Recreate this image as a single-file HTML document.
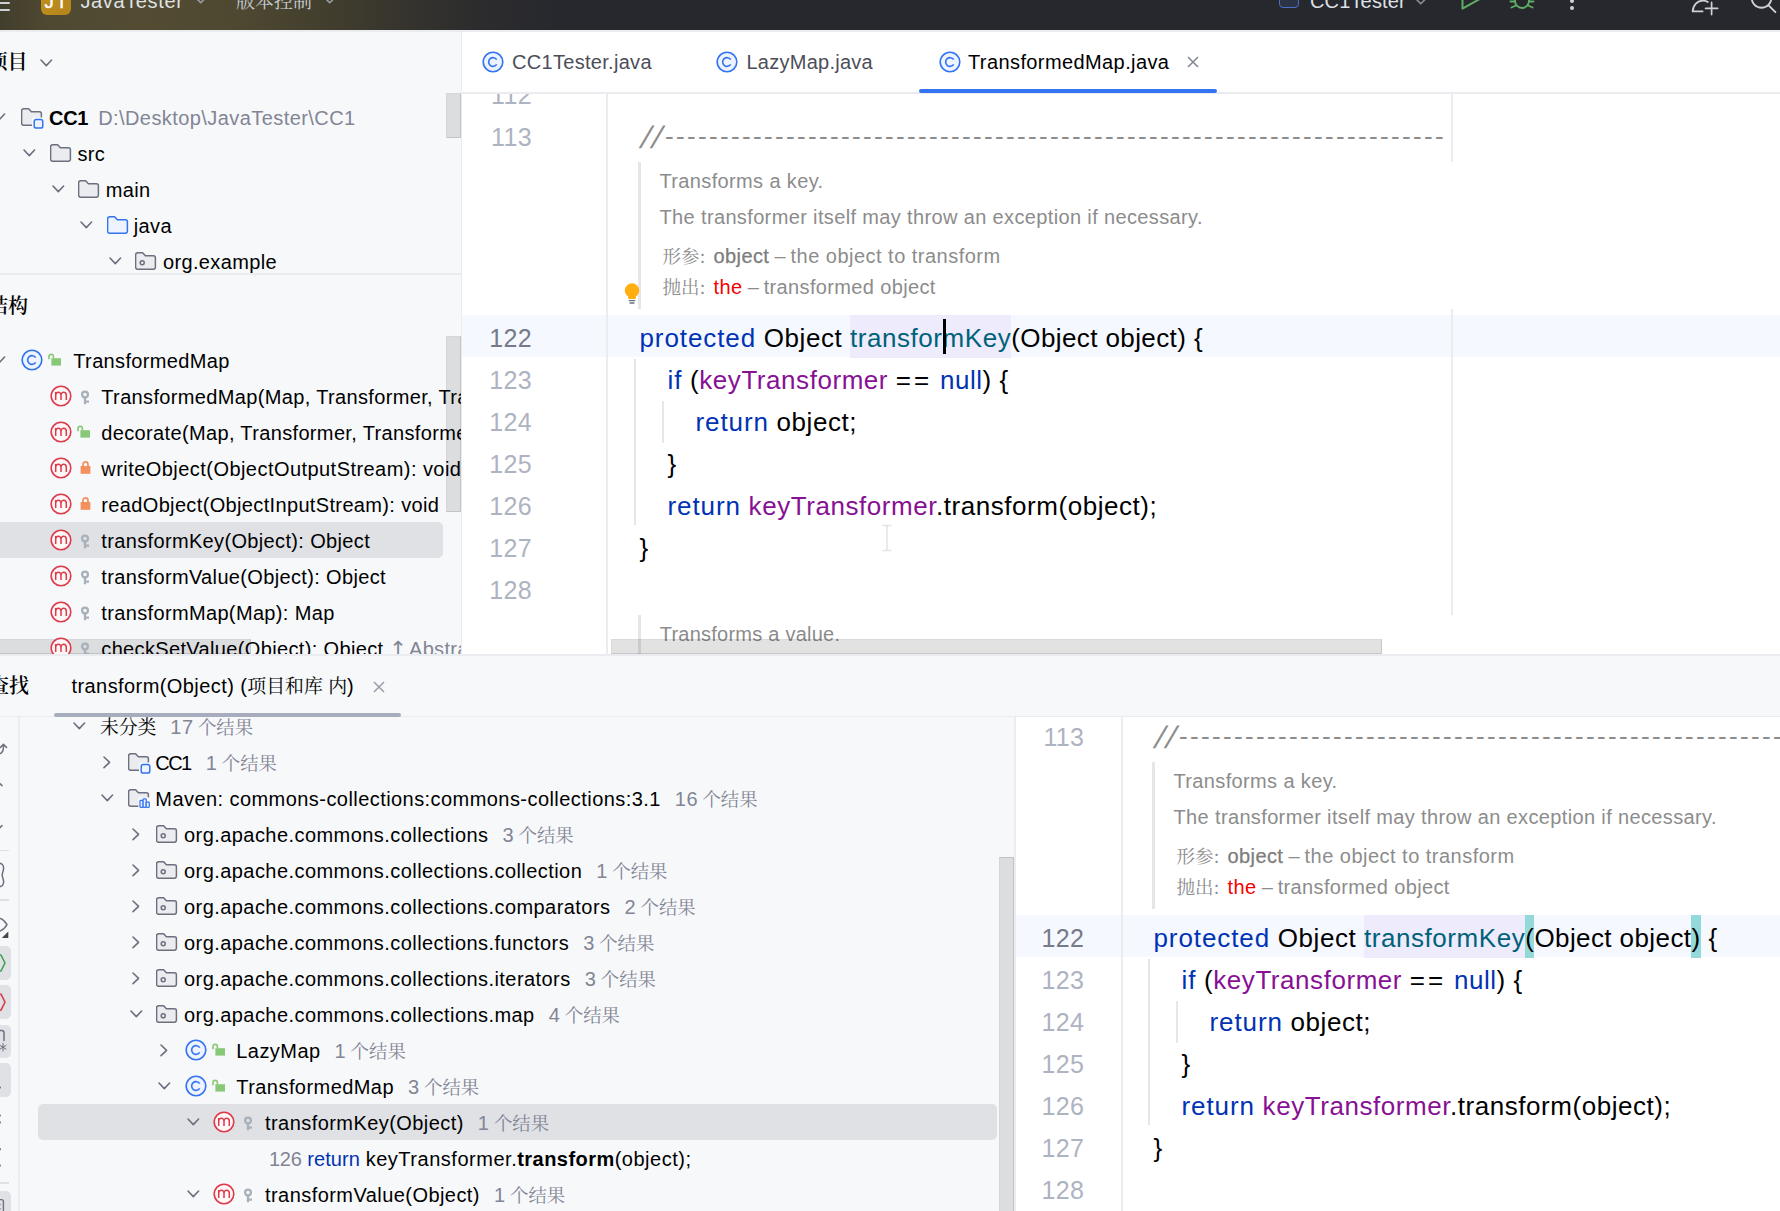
<!DOCTYPE html>
<html lang="zh-CN"><head><meta charset="utf-8"><title>JavaTester – TransformedMap.java</title>
<style>
html,body{margin:0;padding:0}
body{width:1780px;height:1211px;overflow:hidden;position:relative;background:#f7f8fa;font-family:'Liberation Sans','Noto Serif CJK SC',sans-serif;}
.a{position:absolute;display:block}
.t{position:absolute;white-space:pre;overflow:visible}
.cj{font-family:'Noto Serif CJK SC','Noto Sans CJK SC',serif;line-height:0;letter-spacing:0}
.clip{position:absolute;overflow:hidden}
.kw{color:#0033b3;letter-spacing:0.9px}.fd{color:#871094}.fn{color:#00627a}.cm{color:#8c8c8c}
.g{color:#818594}
.sb{background:rgba(0,0,0,0.105);box-sizing:border-box;border:1.5px solid rgba(0,0,0,0.03);border-right-color:rgba(0,0,0,0.11);border-bottom-color:rgba(0,0,0,0.11)}
</style></head><body>

<div class="a" style="left:0;top:0;width:1780px;height:30px;background:#27282e"></div>
<div class="a" style="left:0;top:0;width:600px;height:30px;background:linear-gradient(90deg,#423e2d 0,#4f4932 50px,#534c33 140px,#4e4831 240px,#433f2e 320px,#36342d 400px,#2c2c2e 480px,#27282e 560px)"></div>
<div class="a" style="left:0;top:30px;width:1780px;height:2px;background:#ebecf0"></div>
<div class="a" style="left:-6px;top:2.1px;width:15.6px;height:2.2px;border-radius:1.1px;background:#ced0d6"></div>
<div class="a" style="left:-6px;top:8.9px;width:15.6px;height:2.2px;border-radius:1.1px;background:#ced0d6"></div>
<div class="a" style="left:41px;top:-15px;width:30px;height:30px;border-radius:6px;background:linear-gradient(135deg,#c4921f,#b4831c)"></div>
<div class="t" style="left:44.6px;top:-15.7px;height:36px;line-height:36px;font-size:18.5px;letter-spacing:2.2px;color:#fff;-webkit-text-stroke:0.4px #fff;">JT</div>
<div class="t" style="left:80.5px;top:-16.7px;height:36px;line-height:36px;font-size:20px;letter-spacing:0.62px;color:#dfe1e5;">JavaTester</div>
<svg class="a" style="left:193.75px;top:-4.0px" width="13.5" height="8.8" viewBox="-2 -2 13.5 8.8"><path d="M0 0L4.75 4.8L9.5 0" fill="none" stroke="#9a9ca6" stroke-width="1.6" stroke-linecap="round" stroke-linejoin="round"/></svg>
<div class="t" style="left:236px;top:-16.4px;height:36px;line-height:36px;font-size:19px;letter-spacing:0px;color:#c9ccd6;"><span class="cj" style="">版本控制</span></div>
<svg class="a" style="left:322.75px;top:-4.0px" width="13.5" height="8.8" viewBox="-2 -2 13.5 8.8"><path d="M0 0L4.75 4.8L9.5 0" fill="none" stroke="#9a9ca6" stroke-width="1.6" stroke-linecap="round" stroke-linejoin="round"/></svg>
<div class="a" style="left:1279px;top:-12px;width:18px;height:18px;border:1.6px solid #4a6fc4;border-radius:4px;background:#2d3347"></div>
<div class="t" style="left:1310px;top:-17.1px;height:36px;line-height:36px;font-size:20px;letter-spacing:0.15px;color:#dfe1e5;">CC1Tester</div>
<svg class="a" style="left:1414.25px;top:-3.0px" width="13.5" height="8.8" viewBox="-2 -2 13.5 8.8"><path d="M0 0L4.75 4.8L9.5 0" fill="none" stroke="#8a8c96" stroke-width="1.6" stroke-linecap="round" stroke-linejoin="round"/></svg>
<svg class="a" style="left:1459px;top:-12px" width="28" height="24" viewBox="0 0 28 24"><path d="M3.5 -2V20.6L22.5 10Z" fill="none" stroke="#5fad65" stroke-width="2" stroke-linejoin="round"/></svg>
<svg class="a" style="left:1506px;top:-12px" width="32" height="26" viewBox="0 0 32 26"><g fill="none" stroke="#5fad65" stroke-width="1.9" stroke-linecap="round"><path d="M9 2V13A7 7 0 0 0 23 13V2Z"/><path d="M9 13.5H4.5M23 13.5H27.5M10 17.5L5.5 19.5M22 17.5L26.5 19.5"/></g></svg>
<div class="a" style="left:1570.3px;top:6.3px;width:3.6px;height:3.6px;border-radius:2px;background:#ced0d6"></div>
<div class="a" style="left:1570.3px;top:-1.1px;width:3.6px;height:3.6px;border-radius:2px;background:#ced0d6"></div>
<svg class="a" style="left:1688px;top:-10px" width="34" height="26" viewBox="0 0 34 26"><g fill="none" stroke="#ced0d6" stroke-width="1.7" stroke-linecap="round" stroke-linejoin="round"><path d="M14.6 21.4H4.6C5 15 9.5 10.5 15 10.6C17 10.6 18.6 11.2 19.8 12"/><path d="M23.6 12.4V24.6M17.6 18.4H29.6"/></g></svg>
<svg class="a" style="left:1746px;top:-14px" width="34" height="30" viewBox="0 0 34 30"><g fill="none" stroke="#ced0d6" stroke-width="1.9" stroke-linecap="round"><circle cx="15.5" cy="12" r="9.8"/><path d="M22.6 19.4L29.4 26.2"/></g></svg>
<div class="a" style="left:460.6px;top:32px;width:1.4px;height:622.3px;background:#ebecf0"></div>
<div class="t" style="left:-12.5px;top:44.0px;height:36px;line-height:36px;font-size:20px;letter-spacing:0px;color:#000;font-weight:600;"><span class="cj" style="">项目</span></div>
<svg class="a" style="left:38.7px;top:58.400000000000006px" width="14.6" height="9.6" viewBox="-2 -2 14.6 9.6"><path d="M0 0L5.3 5.6L10.6 0" fill="none" stroke="#6c707e" stroke-width="1.6" stroke-linecap="round" stroke-linejoin="round"/></svg>
<svg class="a" style="left:-8.3px;top:112.4px" width="14.6" height="9.6" viewBox="-2 -2 14.6 9.6"><path d="M0 0L5.3 5.6L10.6 0" fill="none" stroke="#6c707e" stroke-width="1.6" stroke-linecap="round" stroke-linejoin="round"/></svg>
<svg class="a" style="left:21.4px;top:107.6px" width="25" height="23" viewBox="0 0 25 23"><path d="M2.6 0.8H7.6L10.4 3.8H18.4A2 2 0 0 1 20.4 5.8V15.2A2 2 0 0 1 18.4 17.2H2.6A2 2 0 0 1 0.6 15.2V2.8A2 2 0 0 1 2.6 0.8Z" fill="#ebecf0" stroke="#6c707e" stroke-width="1.5" stroke-linejoin="round"/><rect x="11" y="9.5" width="12" height="12" fill="#f7f8fa"/><rect x="13.2" y="11.5" width="8.6" height="8.6" rx="2.2" fill="#edf3ff" stroke="#3574f0" stroke-width="1.5"/></svg>
<div class="t" style="left:49px;top:100.0px;height:36px;line-height:36px;font-size:20px;letter-spacing:0.35px;color:#000;"><b style="letter-spacing:-0.3px">CC1</b><span style="color:#818594;margin-left:10px;letter-spacing:0.43px">D:\Desktop\JavaTester\CC1</span></div>
<svg class="a" style="left:21.9px;top:148.39999999999998px" width="14.6" height="9.6" viewBox="-2 -2 14.6 9.6"><path d="M0 0L5.3 5.6L10.6 0" fill="none" stroke="#6c707e" stroke-width="1.6" stroke-linecap="round" stroke-linejoin="round"/></svg>
<svg class="a" style="left:50.3px;top:144.2px" width="25" height="23" viewBox="0 0 25 23"><path d="M2.6 0.8H7.6L10.4 3.8H18.4A2 2 0 0 1 20.4 5.8V15.2A2 2 0 0 1 18.4 17.2H2.6A2 2 0 0 1 0.6 15.2V2.8A2 2 0 0 1 2.6 0.8Z" fill="#ebecf0" stroke="#6c707e" stroke-width="1.5" stroke-linejoin="round"/></svg>
<div class="t" style="left:77.5px;top:136.0px;height:36px;line-height:36px;font-size:20px;letter-spacing:0.35px;color:#000;">src</div>
<svg class="a" style="left:50.7px;top:184.39999999999998px" width="14.6" height="9.6" viewBox="-2 -2 14.6 9.6"><path d="M0 0L5.3 5.6L10.6 0" fill="none" stroke="#6c707e" stroke-width="1.6" stroke-linecap="round" stroke-linejoin="round"/></svg>
<svg class="a" style="left:78.3px;top:180.2px" width="25" height="23" viewBox="0 0 25 23"><path d="M2.6 0.8H7.6L10.4 3.8H18.4A2 2 0 0 1 20.4 5.8V15.2A2 2 0 0 1 18.4 17.2H2.6A2 2 0 0 1 0.6 15.2V2.8A2 2 0 0 1 2.6 0.8Z" fill="#ebecf0" stroke="#6c707e" stroke-width="1.5" stroke-linejoin="round"/></svg>
<div class="t" style="left:105.7px;top:172.0px;height:36px;line-height:36px;font-size:20px;letter-spacing:0.35px;color:#000;">main</div>
<svg class="a" style="left:78.7px;top:220.39999999999998px" width="14.6" height="9.6" viewBox="-2 -2 14.6 9.6"><path d="M0 0L5.3 5.6L10.6 0" fill="none" stroke="#6c707e" stroke-width="1.6" stroke-linecap="round" stroke-linejoin="round"/></svg>
<svg class="a" style="left:106.8px;top:216.2px" width="25" height="23" viewBox="0 0 25 23"><path d="M2.6 0.8H7.6L10.4 3.8H18.4A2 2 0 0 1 20.4 5.8V15.2A2 2 0 0 1 18.4 17.2H2.6A2 2 0 0 1 0.6 15.2V2.8A2 2 0 0 1 2.6 0.8Z" fill="#edf3ff" stroke="#3574f0" stroke-width="1.5" stroke-linejoin="round"/></svg>
<div class="t" style="left:133.8px;top:208.0px;height:36px;line-height:36px;font-size:20px;letter-spacing:0.35px;color:#000;">java</div>
<svg class="a" style="left:107.7px;top:256.4px" width="14.6" height="9.6" viewBox="-2 -2 14.6 9.6"><path d="M0 0L5.3 5.6L10.6 0" fill="none" stroke="#6c707e" stroke-width="1.6" stroke-linecap="round" stroke-linejoin="round"/></svg>
<svg class="a" style="left:135px;top:252.2px" width="25" height="23" viewBox="0 0 25 23"><path d="M2.6 0.8H7.6L10.4 3.8H18.4A2 2 0 0 1 20.4 5.8V15.2A2 2 0 0 1 18.4 17.2H2.6A2 2 0 0 1 0.6 15.2V2.8A2 2 0 0 1 2.6 0.8Z" fill="#ebecf0" stroke="#6c707e" stroke-width="1.5" stroke-linejoin="round"/><circle cx="7.2" cy="10.8" r="2" fill="none" stroke="#6c707e" stroke-width="1.5"/></svg>
<div class="t" style="left:163px;top:244.0px;height:36px;line-height:36px;font-size:20px;letter-spacing:0.35px;color:#000;">org.example</div>
<div class="a sb" style="left:446px;top:93px;width:15px;height:45px"></div>
<div class="a" style="left:0;top:273px;width:461px;height:1.5px;background:#ebecf0"></div>
<div class="t" style="left:-12px;top:287.7px;height:36px;line-height:36px;font-size:20px;letter-spacing:0px;color:#000;font-weight:600;"><span class="cj" style="">结构</span></div>
<div class="clip" style="left:0;top:330px;width:461px;height:324.3px">
<div class="a" style="left:-10px;top:192px;width:453px;height:36px;border-radius:5px;background:#dfe1e5"></div>
<div class="a sb" style="left:-5px;top:309px;width:256px;height:14.5px"></div>
<svg class="a" style="left:-8.3px;top:25.4px" width="14.6" height="9.6" viewBox="-2 -2 14.6 9.6"><path d="M0 0L5.3 5.6L10.6 0" fill="none" stroke="#6c707e" stroke-width="1.6" stroke-linecap="round" stroke-linejoin="round"/></svg>
<svg class="a" style="left:20px;top:18px" width="24" height="24" viewBox="-12 -12 24 24"><circle r="9.8" fill="#edf3ff" stroke="#3574f0" stroke-width="1.6"/><path d="M3.7 -2.3A4.35 4.35 0 1 0 3.7 2.3" fill="none" stroke="#3574f0" stroke-width="1.6"/></svg>
<svg class="a" style="left:47.6px;top:23px" width="14" height="14" viewBox="0 0 14 14"><rect x="3.4" y="5.2" width="9.6" height="7.4" fill="#89c878"/><path d="M1 6.3V3.6A2.2 2.2 0 0 1 5.4 3.6V5.4" fill="none" stroke="#89c878" stroke-width="1.6"/></svg>
<div class="t" style="left:73.3px;top:13.0px;height:36px;line-height:36px;font-size:20px;letter-spacing:0.35px;color:#000;">TransformedMap</div>
<svg class="a" style="left:49px;top:54px" width="24" height="24" viewBox="-12 -12 24 24"><circle r="9.8" fill="#fff7f7" stroke="#db3b4b" stroke-width="1.6"/><path d="M-5.3 3.9V-3.9M-5.3 -0.8C-5.3 -4.6 0 -4.6 0 -0.8V3.9M0 -0.8C0 -4.6 5.3 -4.6 5.3 -0.8V3.9" fill="none" stroke="#db3b4b" stroke-width="1.5"/></svg>
<svg class="a" style="left:80.4px;top:59.80000000000001px" width="12" height="16" viewBox="0 0 12 16"><circle cx="5" cy="4.6" r="2.9" fill="none" stroke="#a8b1ba" stroke-width="2.3"/><path d="M5 7.4V14.3M5 11.7H9" fill="none" stroke="#a8b1ba" stroke-width="2.3"/></svg>
<div class="t" style="left:101.3px;top:49.0px;height:36px;line-height:36px;font-size:20px;letter-spacing:0.35px;color:#000;">TransformedMap(Map, Transformer, Transformer)</div>
<svg class="a" style="left:49px;top:90px" width="24" height="24" viewBox="-12 -12 24 24"><circle r="9.8" fill="#fff7f7" stroke="#db3b4b" stroke-width="1.6"/><path d="M-5.3 3.9V-3.9M-5.3 -0.8C-5.3 -4.6 0 -4.6 0 -0.8V3.9M0 -0.8C0 -4.6 5.3 -4.6 5.3 -0.8V3.9" fill="none" stroke="#db3b4b" stroke-width="1.5"/></svg>
<svg class="a" style="left:76.6px;top:95px" width="14" height="14" viewBox="0 0 14 14"><rect x="3.4" y="5.2" width="9.6" height="7.4" fill="#89c878"/><path d="M1 6.3V3.6A2.2 2.2 0 0 1 5.4 3.6V5.4" fill="none" stroke="#89c878" stroke-width="1.6"/></svg>
<div class="t" style="left:101.3px;top:85.0px;height:36px;line-height:36px;font-size:20px;letter-spacing:0.35px;color:#000;">decorate(Map, Transformer, Transformer): Map</div>
<svg class="a" style="left:49px;top:126px" width="24" height="24" viewBox="-12 -12 24 24"><circle r="9.8" fill="#fff7f7" stroke="#db3b4b" stroke-width="1.6"/><path d="M-5.3 3.9V-3.9M-5.3 -0.8C-5.3 -4.6 0 -4.6 0 -0.8V3.9M0 -0.8C0 -4.6 5.3 -4.6 5.3 -0.8V3.9" fill="none" stroke="#db3b4b" stroke-width="1.5"/></svg>
<svg class="a" style="left:79.5px;top:130.8px" width="12" height="14" viewBox="0 0 12 14"><rect x="0.6" y="5" width="9.8" height="7.8" fill="#f2905f"/><path d="M3 5.4V3.4A2.5 2.5 0 0 1 8 3.4V5.4" fill="none" stroke="#f2905f" stroke-width="1.7"/></svg>
<div class="t" style="left:101.3px;top:121.0px;height:36px;line-height:36px;font-size:20px;letter-spacing:0.35px;color:#000;"><span style="letter-spacing:0.45px">writeObject(ObjectOutputStream): void</span></div>
<svg class="a" style="left:49px;top:162px" width="24" height="24" viewBox="-12 -12 24 24"><circle r="9.8" fill="#fff7f7" stroke="#db3b4b" stroke-width="1.6"/><path d="M-5.3 3.9V-3.9M-5.3 -0.8C-5.3 -4.6 0 -4.6 0 -0.8V3.9M0 -0.8C0 -4.6 5.3 -4.6 5.3 -0.8V3.9" fill="none" stroke="#db3b4b" stroke-width="1.5"/></svg>
<svg class="a" style="left:79.5px;top:166.8px" width="12" height="14" viewBox="0 0 12 14"><rect x="0.6" y="5" width="9.8" height="7.8" fill="#f2905f"/><path d="M3 5.4V3.4A2.5 2.5 0 0 1 8 3.4V5.4" fill="none" stroke="#f2905f" stroke-width="1.7"/></svg>
<div class="t" style="left:101.3px;top:157.0px;height:36px;line-height:36px;font-size:20px;letter-spacing:0.35px;color:#000;">readObject(ObjectInputStream): void</div>
<svg class="a" style="left:49px;top:198px" width="24" height="24" viewBox="-12 -12 24 24"><circle r="9.8" fill="#fff7f7" stroke="#db3b4b" stroke-width="1.6"/><path d="M-5.3 3.9V-3.9M-5.3 -0.8C-5.3 -4.6 0 -4.6 0 -0.8V3.9M0 -0.8C0 -4.6 5.3 -4.6 5.3 -0.8V3.9" fill="none" stroke="#db3b4b" stroke-width="1.5"/></svg>
<svg class="a" style="left:80.4px;top:203.79999999999995px" width="12" height="16" viewBox="0 0 12 16"><circle cx="5" cy="4.6" r="2.9" fill="none" stroke="#a8b1ba" stroke-width="2.3"/><path d="M5 7.4V14.3M5 11.7H9" fill="none" stroke="#a8b1ba" stroke-width="2.3"/></svg>
<div class="t" style="left:101.3px;top:193.0px;height:36px;line-height:36px;font-size:20px;letter-spacing:0.35px;color:#000;">transformKey(Object): Object</div>
<svg class="a" style="left:49px;top:234px" width="24" height="24" viewBox="-12 -12 24 24"><circle r="9.8" fill="#fff7f7" stroke="#db3b4b" stroke-width="1.6"/><path d="M-5.3 3.9V-3.9M-5.3 -0.8C-5.3 -4.6 0 -4.6 0 -0.8V3.9M0 -0.8C0 -4.6 5.3 -4.6 5.3 -0.8V3.9" fill="none" stroke="#db3b4b" stroke-width="1.5"/></svg>
<svg class="a" style="left:80.4px;top:239.79999999999995px" width="12" height="16" viewBox="0 0 12 16"><circle cx="5" cy="4.6" r="2.9" fill="none" stroke="#a8b1ba" stroke-width="2.3"/><path d="M5 7.4V14.3M5 11.7H9" fill="none" stroke="#a8b1ba" stroke-width="2.3"/></svg>
<div class="t" style="left:101.3px;top:229.0px;height:36px;line-height:36px;font-size:20px;letter-spacing:0.35px;color:#000;">transformValue(Object): Object</div>
<svg class="a" style="left:49px;top:270px" width="24" height="24" viewBox="-12 -12 24 24"><circle r="9.8" fill="#fff7f7" stroke="#db3b4b" stroke-width="1.6"/><path d="M-5.3 3.9V-3.9M-5.3 -0.8C-5.3 -4.6 0 -4.6 0 -0.8V3.9M0 -0.8C0 -4.6 5.3 -4.6 5.3 -0.8V3.9" fill="none" stroke="#db3b4b" stroke-width="1.5"/></svg>
<svg class="a" style="left:80.4px;top:275.79999999999995px" width="12" height="16" viewBox="0 0 12 16"><circle cx="5" cy="4.6" r="2.9" fill="none" stroke="#a8b1ba" stroke-width="2.3"/><path d="M5 7.4V14.3M5 11.7H9" fill="none" stroke="#a8b1ba" stroke-width="2.3"/></svg>
<div class="t" style="left:101.3px;top:265.0px;height:36px;line-height:36px;font-size:20px;letter-spacing:0.35px;color:#000;">transformMap(Map): Map</div>
<svg class="a" style="left:49px;top:306px" width="24" height="24" viewBox="-12 -12 24 24"><circle r="9.8" fill="#fff7f7" stroke="#db3b4b" stroke-width="1.6"/><path d="M-5.3 3.9V-3.9M-5.3 -0.8C-5.3 -4.6 0 -4.6 0 -0.8V3.9M0 -0.8C0 -4.6 5.3 -4.6 5.3 -0.8V3.9" fill="none" stroke="#db3b4b" stroke-width="1.5"/></svg>
<svg class="a" style="left:80.4px;top:311.79999999999995px" width="12" height="16" viewBox="0 0 12 16"><circle cx="5" cy="4.6" r="2.9" fill="none" stroke="#a8b1ba" stroke-width="2.3"/><path d="M5 7.4V14.3M5 11.7H9" fill="none" stroke="#a8b1ba" stroke-width="2.3"/></svg>
<div class="t" style="left:101.3px;top:301.0px;height:36px;line-height:36px;font-size:20px;letter-spacing:0.35px;color:#000;">checkSetValue(Object): Object<span style="color:#818594"> <span style="font-family:DejaVu Sans,sans-serif;font-size:21px;line-height:0;letter-spacing:0;margin-right:2px">↑</span>AbstractInputCheckedMapDecorator</span></div>
</div>
<div class="a sb" style="left:446px;top:336px;width:15px;height:176px"></div>
<div class="a" style="left:462px;top:32px;width:1318px;height:622.3px;background:#fff"></div>
<div class="a" style="left:462px;top:92px;width:1318px;height:2px;background:#ebecf0"></div>
<svg class="a" style="left:480.8px;top:50px" width="24" height="24" viewBox="-12 -12 24 24"><circle r="9.8" fill="#edf3ff" stroke="#3574f0" stroke-width="1.6"/><path d="M3.7 -2.3A4.35 4.35 0 1 0 3.7 2.3" fill="none" stroke="#3574f0" stroke-width="1.6"/></svg>
<div class="t" style="left:512px;top:44.0px;height:36px;line-height:36px;font-size:20px;letter-spacing:0.3px;color:#4b4e58;">CC1Tester.java</div>
<svg class="a" style="left:714.8px;top:50px" width="24" height="24" viewBox="-12 -12 24 24"><circle r="9.8" fill="#edf3ff" stroke="#3574f0" stroke-width="1.6"/><path d="M3.7 -2.3A4.35 4.35 0 1 0 3.7 2.3" fill="none" stroke="#3574f0" stroke-width="1.6"/></svg>
<div class="t" style="left:746.5px;top:44.0px;height:36px;line-height:36px;font-size:20px;letter-spacing:0.25px;color:#4b4e58;">LazyMap.java</div>
<svg class="a" style="left:937.5px;top:50px" width="24" height="24" viewBox="-12 -12 24 24"><circle r="9.8" fill="#edf3ff" stroke="#3574f0" stroke-width="1.6"/><path d="M3.7 -2.3A4.35 4.35 0 1 0 3.7 2.3" fill="none" stroke="#3574f0" stroke-width="1.6"/></svg>
<div class="t" style="left:968px;top:44.0px;height:36px;line-height:36px;font-size:20px;letter-spacing:0.4px;color:#000;">TransformedMap.java</div>
<svg class="a" style="left:1186px;top:55px" width="14" height="14" viewBox="0 0 14 14"><path d="M2 2L12 12M12 2L2 12" stroke="#818594" stroke-width="1.5" fill="none"/></svg>
<div class="a" style="left:919px;top:88.5px;width:298px;height:4.5px;border-radius:2.5px;background:#3574f0"></div>
<div class="clip" style="left:462px;top:94px;width:1318px;height:560.3px">
<div class="a" style="left:-462px;top:-94px;width:1780px;height:1211px">
<div class="a" style="left:462px;top:315px;width:1318px;height:42px;background:#f5f8fe"></div>
<div class="a" style="left:606.3px;top:93.5px;width:1.5px;height:620px;background:#ebecf0"></div>
<div class="t" style="left:472.0px;width:60px;text-align:right;top:73.8px;height:42px;line-height:42px;font-size:25px;letter-spacing:0.35px;color:#aeb3c2">112</div>
<div class="t" style="left:472.0px;width:60px;text-align:right;top:115.8px;height:42px;line-height:42px;font-size:25px;letter-spacing:0.35px;color:#aeb3c2">113</div>
<div class="t" style="left:472.0px;width:60px;text-align:right;top:316.8px;height:42px;line-height:42px;font-size:25px;letter-spacing:0.35px;color:#767a8a">122</div>
<div class="t" style="left:472.0px;width:60px;text-align:right;top:358.8px;height:42px;line-height:42px;font-size:25px;letter-spacing:0.35px;color:#aeb3c2">123</div>
<div class="t" style="left:472.0px;width:60px;text-align:right;top:400.8px;height:42px;line-height:42px;font-size:25px;letter-spacing:0.35px;color:#aeb3c2">124</div>
<div class="t" style="left:472.0px;width:60px;text-align:right;top:442.8px;height:42px;line-height:42px;font-size:25px;letter-spacing:0.35px;color:#aeb3c2">125</div>
<div class="t" style="left:472.0px;width:60px;text-align:right;top:484.8px;height:42px;line-height:42px;font-size:25px;letter-spacing:0.35px;color:#aeb3c2">126</div>
<div class="t" style="left:472.0px;width:60px;text-align:right;top:526.8px;height:42px;line-height:42px;font-size:25px;letter-spacing:0.35px;color:#aeb3c2">127</div>
<div class="t" style="left:472.0px;width:60px;text-align:right;top:568.8px;height:42px;line-height:42px;font-size:25px;letter-spacing:0.35px;color:#aeb3c2">128</div>
<div class="t" style="left:639.5px;top:116px;height:42px;line-height:42px;font-size:26px;letter-spacing:0.55px;color:#000"><span class="cm" style="display:inline-block;transform:skewX(-17.5deg);font-size:31px;line-height:0;position:relative;top:2.2px;letter-spacing:2.4px;margin-left:2.5px;margin-right:1px">//</span><span class="cm" style="letter-spacing:2.34px;position:relative;top:-1px">-----------------------------------------------------------------------</span></div>
<div class="a" style="left:638.0px;top:162.3px;width:3px;height:146.5px;background:#e6e6e8"></div>
<div class="t" style="left:659.5px;top:163.0px;height:36px;line-height:36px;font-size:20px;letter-spacing:0.36px;color:#8c8c8c;">Transforms a key.</div>
<div class="t" style="left:659.5px;top:199.0px;height:36px;line-height:36px;font-size:20px;letter-spacing:0.36px;color:#8c8c8c;">The transformer itself may throw an exception if necessary.</div>
<div class="t" style="left:662.5px;top:237.5px;height:36px;line-height:36px;font-size:20px;letter-spacing:0.36px;color:#8c8c8c;"><span class="cj" style="font-size:18.5px;">形参:</span><span style="margin-left:8px;color:#7c7c7c;-webkit-text-stroke:0.25px #7c7c7c;letter-spacing:0.4px">object</span><span style="letter-spacing:-0.35px"> – </span><span style="letter-spacing:0.48px">the object to transform</span></div>
<div class="t" style="left:662.5px;top:269.0px;height:36px;line-height:36px;font-size:20px;letter-spacing:0.36px;color:#8c8c8c;"><span class="cj" style="font-size:18.5px;">抛出:</span><span style="margin-left:8px;color:#f50000">the</span><span style="letter-spacing:-0.35px"> – </span>transformed object</div>
<div class="a" style="left:634.0px;top:359px;width:1.5px;height:166px;background:#e6e6e9"></div>
<div class="a" style="left:662.0px;top:401px;width:1.5px;height:42px;background:#e6e6e9"></div>
<div class="t" style="left:639.5px;top:317px;height:42px;line-height:42px;font-size:26px;letter-spacing:0.55px;color:#000"><span class="kw">protected</span> Object <span class="fn" style="background:#edebfc;padding:8px 0 5px">transformKey</span><span style="letter-spacing:0.4px">(Object object) {</span></div>
<div class="t" style="left:667.5px;top:359px;height:42px;line-height:42px;font-size:26px;letter-spacing:0.55px;color:#000"><span class="kw">if</span> (<span class="fd">keyTransformer</span> <span style="letter-spacing:3px">==</span> <span class="kw" style="letter-spacing:0.5px">null</span>) {</div>
<div class="t" style="left:695.5px;top:401px;height:42px;line-height:42px;font-size:26px;letter-spacing:0.55px;color:#000"><span class="kw">return</span> object;</div>
<div class="t" style="left:667.5px;top:443px;height:42px;line-height:42px;font-size:26px;letter-spacing:0.55px;color:#000">}</div>
<div class="t" style="left:667.5px;top:485px;height:42px;line-height:42px;font-size:26px;letter-spacing:0.55px;color:#000"><span class="kw">return</span> <span class="fd">keyTransformer</span>.transform(object);</div>
<div class="t" style="left:639.5px;top:527px;height:42px;line-height:42px;font-size:26px;letter-spacing:0.55px;color:#000">}</div>
<div class="a" style="left:1451px;top:93px;width:2px;height:69px;background:#ebecf0"></div>
<div class="a" style="left:1451px;top:309px;width:2px;height:306px;background:#ebecf0"></div>
<div class="a" style="left:943px;top:319px;width:3px;height:35px;background:#000"></div>
<svg class="a" style="left:622px;top:281px" width="20" height="26" viewBox="0 0 20 26"><circle cx="10" cy="9.5" r="7.2" fill="#ffaf0f"/><path d="M6.2 14H13.8V18H6.2Z" fill="#ffaf0f"/><path d="M6.8 19.6H13.2M7.6 22H12.4" stroke="#6c707e" stroke-width="1.3" fill="none"/></svg>
<div class="a" style="left:637.8px;top:615.3px;width:3px;height:40px;background:#e6e6e8"></div>
<div class="t" style="left:659.7px;top:616.1px;height:36px;line-height:36px;font-size:20px;letter-spacing:0.24px;color:#8c8c8c;">Transforms a value.</div>
<svg class="a" style="left:880px;top:524px" width="14" height="28" viewBox="0 0 14 28"><path d="M2.5 1.5H11.5M2.5 26.5H11.5M7 1.5V26.5" stroke="#e4e4e8" stroke-width="1.6" fill="none"/></svg>
<div class="a sb" style="left:611px;top:639.4px;width:770.5px;height:14.6px;background:rgba(0,0,0,0.115)"></div>
</div></div>
<div class="a" style="left:0;top:654.3px;width:1780px;height:1.5px;background:#ebecf0"></div>
<div class="a" style="left:0;top:655.8px;width:1780px;height:560px;background:#f7f8fa"></div>
<div class="t" style="left:-11px;top:668.0px;height:36px;line-height:36px;font-size:20px;letter-spacing:0px;color:#000;font-weight:600;"><span class="cj" style="">查找</span></div>
<div class="t" style="left:71.5px;top:668.0px;height:36px;line-height:36px;font-size:20px;letter-spacing:0.42px;color:#000;">transform(Object) (<span class="cj" style="font-size:18.9px;word-spacing:0.5px;">项目和库 内</span>)</div>
<svg class="a" style="left:372px;top:680px" width="14" height="14" viewBox="0 0 14 14"><path d="M2 2L12 12M12 2L2 12" stroke="#9a9da8" stroke-width="1.5" fill="none"/></svg>
<div class="a" style="left:0;top:715.5px;width:1780px;height:1.5px;background:#ebecf0"></div>
<div class="a" style="left:54px;top:712.5px;width:347px;height:4px;border-radius:2px;background:#a8adbd"></div>
<div class="a" style="left:18px;top:717px;width:1.5px;height:500px;background:#ebecf0"></div>
<div class="clip" style="left:20px;top:717px;width:994px;height:494px">
<div class="a" style="left:-20px;top:-717px;width:1780px;height:1211px">
<div class="a" style="left:38px;top:1103.6px;width:959px;height:36.2px;border-radius:5px;background:#dfe1e5"></div>
<svg class="a" style="left:71.7px;top:721.4000000000001px" width="14.6" height="9.6" viewBox="-2 -2 14.6 9.6"><path d="M0 0L5.3 5.6L10.6 0" fill="none" stroke="#6c707e" stroke-width="1.6" stroke-linecap="round" stroke-linejoin="round"/></svg>
<div class="t" style="left:100px;top:709.0px;height:36px;line-height:36px;font-size:20px;letter-spacing:0.44px;color:#000;"><span class="cj" style="font-size:18.8px;">未分类</span><span class="g" style="margin-left:14px">17 <span class="cj" style="font-size:18.4px;margin-left:-1.5px;">个结果</span></span></div>
<svg class="a" style="left:102.2px;top:754.9000000000001px" width="9.6" height="14.6" viewBox="-2 -2 9.6 14.6"><path d="M0 0L5.6 5.3L0 10.6" fill="none" stroke="#6c707e" stroke-width="1.6" stroke-linecap="round" stroke-linejoin="round"/></svg>
<svg class="a" style="left:127.5px;top:752.8px" width="25" height="23" viewBox="0 0 25 23"><path d="M2.6 0.8H7.6L10.4 3.8H18.4A2 2 0 0 1 20.4 5.8V15.2A2 2 0 0 1 18.4 17.2H2.6A2 2 0 0 1 0.6 15.2V2.8A2 2 0 0 1 2.6 0.8Z" fill="#ebecf0" stroke="#6c707e" stroke-width="1.5" stroke-linejoin="round"/><rect x="11" y="9.5" width="12" height="12" fill="#f7f8fa"/><rect x="13.2" y="11.5" width="8.6" height="8.6" rx="2.2" fill="#edf3ff" stroke="#3574f0" stroke-width="1.5"/></svg>
<div class="t" style="left:155.3px;top:745.0px;height:36px;line-height:36px;font-size:20px;letter-spacing:0.44px;color:#000;"><span style="letter-spacing:-1.6px">CC1</span><span style="margin-left:1.2px"></span><span class="g" style="margin-left:14px">1 <span class="cj" style="font-size:18.4px;margin-left:-1.5px;">个结果</span></span></div>
<svg class="a" style="left:99.7px;top:793.4000000000001px" width="14.6" height="9.6" viewBox="-2 -2 14.6 9.6"><path d="M0 0L5.3 5.6L10.6 0" fill="none" stroke="#6c707e" stroke-width="1.6" stroke-linecap="round" stroke-linejoin="round"/></svg>
<svg class="a" style="left:127.5px;top:788.8px" width="25" height="23" viewBox="0 0 25 23"><path d="M2.6 0.8H7.6L10.4 3.8H18.4A2 2 0 0 1 20.4 5.8V15.2A2 2 0 0 1 18.4 17.2H2.6A2 2 0 0 1 0.6 15.2V2.8A2 2 0 0 1 2.6 0.8Z" fill="#ebecf0" stroke="#6c707e" stroke-width="1.5" stroke-linejoin="round"/><rect x="10.4" y="8.4" width="13" height="12" fill="#f7f8fa"/><g fill="#edf3ff" stroke="#3574f0" stroke-width="1.25"><rect x="12" y="11.4" width="3.1" height="6.9" rx="0.8"/><rect x="15.1" y="9.8" width="3.1" height="8.5" rx="0.8"/><rect x="18.2" y="13" width="3.1" height="5.3" rx="0.8"/></g></svg>
<div class="t" style="left:155.3px;top:781.0px;height:36px;line-height:36px;font-size:20px;letter-spacing:0.44px;color:#000;">Maven: commons-collections:commons-collections:3.1<span class="g" style="margin-left:14px">16 <span class="cj" style="font-size:18.4px;margin-left:-1.5px;">个结果</span></span></div>
<svg class="a" style="left:131.2px;top:826.9000000000001px" width="9.6" height="14.6" viewBox="-2 -2 9.6 14.6"><path d="M0 0L5.6 5.3L0 10.6" fill="none" stroke="#6c707e" stroke-width="1.6" stroke-linecap="round" stroke-linejoin="round"/></svg>
<svg class="a" style="left:156px;top:825.2px" width="25" height="23" viewBox="0 0 25 23"><path d="M2.6 0.8H7.6L10.4 3.8H18.4A2 2 0 0 1 20.4 5.8V15.2A2 2 0 0 1 18.4 17.2H2.6A2 2 0 0 1 0.6 15.2V2.8A2 2 0 0 1 2.6 0.8Z" fill="#ebecf0" stroke="#6c707e" stroke-width="1.5" stroke-linejoin="round"/><circle cx="7.2" cy="10.8" r="2" fill="none" stroke="#6c707e" stroke-width="1.5"/></svg>
<div class="t" style="left:184px;top:817.0px;height:36px;line-height:36px;font-size:20px;letter-spacing:0.44px;color:#000;">org.apache.commons.collections<span class="g" style="margin-left:14px">3 <span class="cj" style="font-size:18.4px;margin-left:-1.5px;">个结果</span></span></div>
<svg class="a" style="left:131.2px;top:862.9000000000001px" width="9.6" height="14.6" viewBox="-2 -2 9.6 14.6"><path d="M0 0L5.6 5.3L0 10.6" fill="none" stroke="#6c707e" stroke-width="1.6" stroke-linecap="round" stroke-linejoin="round"/></svg>
<svg class="a" style="left:156px;top:861.2px" width="25" height="23" viewBox="0 0 25 23"><path d="M2.6 0.8H7.6L10.4 3.8H18.4A2 2 0 0 1 20.4 5.8V15.2A2 2 0 0 1 18.4 17.2H2.6A2 2 0 0 1 0.6 15.2V2.8A2 2 0 0 1 2.6 0.8Z" fill="#ebecf0" stroke="#6c707e" stroke-width="1.5" stroke-linejoin="round"/><circle cx="7.2" cy="10.8" r="2" fill="none" stroke="#6c707e" stroke-width="1.5"/></svg>
<div class="t" style="left:184px;top:853.0px;height:36px;line-height:36px;font-size:20px;letter-spacing:0.44px;color:#000;">org.apache.commons.collections.collection<span class="g" style="margin-left:14px">1 <span class="cj" style="font-size:18.4px;margin-left:-1.5px;">个结果</span></span></div>
<svg class="a" style="left:131.2px;top:898.9000000000001px" width="9.6" height="14.6" viewBox="-2 -2 9.6 14.6"><path d="M0 0L5.6 5.3L0 10.6" fill="none" stroke="#6c707e" stroke-width="1.6" stroke-linecap="round" stroke-linejoin="round"/></svg>
<svg class="a" style="left:156px;top:897.2px" width="25" height="23" viewBox="0 0 25 23"><path d="M2.6 0.8H7.6L10.4 3.8H18.4A2 2 0 0 1 20.4 5.8V15.2A2 2 0 0 1 18.4 17.2H2.6A2 2 0 0 1 0.6 15.2V2.8A2 2 0 0 1 2.6 0.8Z" fill="#ebecf0" stroke="#6c707e" stroke-width="1.5" stroke-linejoin="round"/><circle cx="7.2" cy="10.8" r="2" fill="none" stroke="#6c707e" stroke-width="1.5"/></svg>
<div class="t" style="left:184px;top:889.0px;height:36px;line-height:36px;font-size:20px;letter-spacing:0.44px;color:#000;">org.apache.commons.collections.comparators<span class="g" style="margin-left:14px">2 <span class="cj" style="font-size:18.4px;margin-left:-1.5px;">个结果</span></span></div>
<svg class="a" style="left:131.2px;top:934.9000000000001px" width="9.6" height="14.6" viewBox="-2 -2 9.6 14.6"><path d="M0 0L5.6 5.3L0 10.6" fill="none" stroke="#6c707e" stroke-width="1.6" stroke-linecap="round" stroke-linejoin="round"/></svg>
<svg class="a" style="left:156px;top:933.2px" width="25" height="23" viewBox="0 0 25 23"><path d="M2.6 0.8H7.6L10.4 3.8H18.4A2 2 0 0 1 20.4 5.8V15.2A2 2 0 0 1 18.4 17.2H2.6A2 2 0 0 1 0.6 15.2V2.8A2 2 0 0 1 2.6 0.8Z" fill="#ebecf0" stroke="#6c707e" stroke-width="1.5" stroke-linejoin="round"/><circle cx="7.2" cy="10.8" r="2" fill="none" stroke="#6c707e" stroke-width="1.5"/></svg>
<div class="t" style="left:184px;top:925.0px;height:36px;line-height:36px;font-size:20px;letter-spacing:0.44px;color:#000;">org.apache.commons.collections.functors<span class="g" style="margin-left:14px">3 <span class="cj" style="font-size:18.4px;margin-left:-1.5px;">个结果</span></span></div>
<svg class="a" style="left:131.2px;top:970.9000000000001px" width="9.6" height="14.6" viewBox="-2 -2 9.6 14.6"><path d="M0 0L5.6 5.3L0 10.6" fill="none" stroke="#6c707e" stroke-width="1.6" stroke-linecap="round" stroke-linejoin="round"/></svg>
<svg class="a" style="left:156px;top:969.2px" width="25" height="23" viewBox="0 0 25 23"><path d="M2.6 0.8H7.6L10.4 3.8H18.4A2 2 0 0 1 20.4 5.8V15.2A2 2 0 0 1 18.4 17.2H2.6A2 2 0 0 1 0.6 15.2V2.8A2 2 0 0 1 2.6 0.8Z" fill="#ebecf0" stroke="#6c707e" stroke-width="1.5" stroke-linejoin="round"/><circle cx="7.2" cy="10.8" r="2" fill="none" stroke="#6c707e" stroke-width="1.5"/></svg>
<div class="t" style="left:184px;top:961.0px;height:36px;line-height:36px;font-size:20px;letter-spacing:0.44px;color:#000;">org.apache.commons.collections.iterators<span class="g" style="margin-left:14px">3 <span class="cj" style="font-size:18.4px;margin-left:-1.5px;">个结果</span></span></div>
<svg class="a" style="left:128.7px;top:1009.4000000000001px" width="14.6" height="9.6" viewBox="-2 -2 14.6 9.6"><path d="M0 0L5.3 5.6L10.6 0" fill="none" stroke="#6c707e" stroke-width="1.6" stroke-linecap="round" stroke-linejoin="round"/></svg>
<svg class="a" style="left:156px;top:1005.2px" width="25" height="23" viewBox="0 0 25 23"><path d="M2.6 0.8H7.6L10.4 3.8H18.4A2 2 0 0 1 20.4 5.8V15.2A2 2 0 0 1 18.4 17.2H2.6A2 2 0 0 1 0.6 15.2V2.8A2 2 0 0 1 2.6 0.8Z" fill="#ebecf0" stroke="#6c707e" stroke-width="1.5" stroke-linejoin="round"/><circle cx="7.2" cy="10.8" r="2" fill="none" stroke="#6c707e" stroke-width="1.5"/></svg>
<div class="t" style="left:184px;top:997.0px;height:36px;line-height:36px;font-size:20px;letter-spacing:0.44px;color:#000;">org.apache.commons.collections.map<span class="g" style="margin-left:14px">4 <span class="cj" style="font-size:18.4px;margin-left:-1.5px;">个结果</span></span></div>
<svg class="a" style="left:159.2px;top:1042.9px" width="9.6" height="14.6" viewBox="-2 -2 9.6 14.6"><path d="M0 0L5.6 5.3L0 10.6" fill="none" stroke="#6c707e" stroke-width="1.6" stroke-linecap="round" stroke-linejoin="round"/></svg>
<svg class="a" style="left:184px;top:1038px" width="24" height="24" viewBox="-12 -12 24 24"><circle r="9.8" fill="#edf3ff" stroke="#3574f0" stroke-width="1.6"/><path d="M3.7 -2.3A4.35 4.35 0 1 0 3.7 2.3" fill="none" stroke="#3574f0" stroke-width="1.6"/></svg>
<svg class="a" style="left:211.6px;top:1043px" width="14" height="14" viewBox="0 0 14 14"><rect x="3.4" y="5.2" width="9.6" height="7.4" fill="#89c878"/><path d="M1 6.3V3.6A2.2 2.2 0 0 1 5.4 3.6V5.4" fill="none" stroke="#89c878" stroke-width="1.6"/></svg>
<div class="t" style="left:236.3px;top:1033.0px;height:36px;line-height:36px;font-size:20px;letter-spacing:0.44px;color:#000;">LazyMap<span class="g" style="margin-left:14px">1 <span class="cj" style="font-size:18.4px;margin-left:-1.5px;">个结果</span></span></div>
<svg class="a" style="left:156.7px;top:1081.4px" width="14.6" height="9.6" viewBox="-2 -2 14.6 9.6"><path d="M0 0L5.3 5.6L10.6 0" fill="none" stroke="#6c707e" stroke-width="1.6" stroke-linecap="round" stroke-linejoin="round"/></svg>
<svg class="a" style="left:184px;top:1074px" width="24" height="24" viewBox="-12 -12 24 24"><circle r="9.8" fill="#edf3ff" stroke="#3574f0" stroke-width="1.6"/><path d="M3.7 -2.3A4.35 4.35 0 1 0 3.7 2.3" fill="none" stroke="#3574f0" stroke-width="1.6"/></svg>
<svg class="a" style="left:211.6px;top:1079px" width="14" height="14" viewBox="0 0 14 14"><rect x="3.4" y="5.2" width="9.6" height="7.4" fill="#89c878"/><path d="M1 6.3V3.6A2.2 2.2 0 0 1 5.4 3.6V5.4" fill="none" stroke="#89c878" stroke-width="1.6"/></svg>
<div class="t" style="left:236.3px;top:1069.0px;height:36px;line-height:36px;font-size:20px;letter-spacing:0.44px;color:#000;">TransformedMap<span class="g" style="margin-left:14px">3 <span class="cj" style="font-size:18.4px;margin-left:-1.5px;">个结果</span></span></div>
<svg class="a" style="left:185.7px;top:1117.4px" width="14.6" height="9.6" viewBox="-2 -2 14.6 9.6"><path d="M0 0L5.3 5.6L10.6 0" fill="none" stroke="#6c707e" stroke-width="1.6" stroke-linecap="round" stroke-linejoin="round"/></svg>
<svg class="a" style="left:212px;top:1110px" width="24" height="24" viewBox="-12 -12 24 24"><circle r="9.8" fill="#fff7f7" stroke="#db3b4b" stroke-width="1.6"/><path d="M-5.3 3.9V-3.9M-5.3 -0.8C-5.3 -4.6 0 -4.6 0 -0.8V3.9M0 -0.8C0 -4.6 5.3 -4.6 5.3 -0.8V3.9" fill="none" stroke="#db3b4b" stroke-width="1.5"/></svg>
<svg class="a" style="left:243.4px;top:1115.8px" width="12" height="16" viewBox="0 0 12 16"><circle cx="5" cy="4.6" r="2.9" fill="none" stroke="#a8b1ba" stroke-width="2.3"/><path d="M5 7.4V14.3M5 11.7H9" fill="none" stroke="#a8b1ba" stroke-width="2.3"/></svg>
<div class="t" style="left:265px;top:1105.0px;height:36px;line-height:36px;font-size:20px;letter-spacing:0.44px;color:#000;">transformKey(Object)<span class="g" style="margin-left:14px">1 <span class="cj" style="font-size:18.4px;margin-left:-1.5px;">个结果</span></span></div>
<div class="t" style="left:269px;top:1141.0px;height:36px;line-height:36px;font-size:20px;letter-spacing:0.52px;color:#000;"><span class="g" style="letter-spacing:-0.3px">126</span><span style="letter-spacing:0.1px"> </span><span style="color:#0033b3;letter-spacing:0.1px">return</span><span style="letter-spacing:0.1px"> </span>keyTransformer.<b style="letter-spacing:0.45px">transform</b>(object);</div>
<svg class="a" style="left:185.7px;top:1189.4px" width="14.6" height="9.6" viewBox="-2 -2 14.6 9.6"><path d="M0 0L5.3 5.6L10.6 0" fill="none" stroke="#6c707e" stroke-width="1.6" stroke-linecap="round" stroke-linejoin="round"/></svg>
<svg class="a" style="left:212px;top:1182px" width="24" height="24" viewBox="-12 -12 24 24"><circle r="9.8" fill="#fff7f7" stroke="#db3b4b" stroke-width="1.6"/><path d="M-5.3 3.9V-3.9M-5.3 -0.8C-5.3 -4.6 0 -4.6 0 -0.8V3.9M0 -0.8C0 -4.6 5.3 -4.6 5.3 -0.8V3.9" fill="none" stroke="#db3b4b" stroke-width="1.5"/></svg>
<svg class="a" style="left:243.4px;top:1187.8px" width="12" height="16" viewBox="0 0 12 16"><circle cx="5" cy="4.6" r="2.9" fill="none" stroke="#a8b1ba" stroke-width="2.3"/><path d="M5 7.4V14.3M5 11.7H9" fill="none" stroke="#a8b1ba" stroke-width="2.3"/></svg>
<div class="t" style="left:265px;top:1177.0px;height:36px;line-height:36px;font-size:20px;letter-spacing:0.44px;color:#000;">transformValue(Object)<span class="g" style="margin-left:14px">1 <span class="cj" style="font-size:18.4px;margin-left:-1.5px;">个结果</span></span></div>
</div></div>
<div class="a sb" style="left:999px;top:857px;width:14.5px;height:370px;border-top-color:rgba(0,0,0,0.11)"></div>
<div class="a" style="left:1014.3px;top:717px;width:1.7px;height:500px;background:#ebecf0"></div>
<div class="a" style="left:0;top:849.5px;width:9px;height:1.5px;background:#dfe1e5"></div>
<div class="a" style="left:0;top:899px;width:9px;height:1.5px;background:#dfe1e5"></div>
<div class="a" style="left:0;top:1182px;width:9px;height:1.5px;background:#dfe1e5"></div>
<div class="a" style="left:-10px;top:946.3px;width:21.2px;height:33.5px;border-radius:5px;background:#dfe1e5"></div>
<div class="a" style="left:-10px;top:985.4px;width:21.2px;height:33.5px;border-radius:5px;background:#dfe1e5"></div>
<div class="a" style="left:-10px;top:1024.6px;width:21.2px;height:33.5px;border-radius:5px;background:#dfe1e5"></div>
<div class="a" style="left:-10px;top:1063.2px;width:21.2px;height:33.5px;border-radius:5px;background:#dfe1e5"></div>
<div class="a" style="left:-10px;top:1190.6px;width:21.2px;height:33.5px;border-radius:5px;background:#dfe1e5"></div>
<svg class="a" style="left:0;top:720px" width="18" height="491" viewBox="0 720 18 491"><g fill="none" stroke-width="1.5" stroke-linecap="round" stroke-linejoin="round"><path d="M-1.5 754.3C1.8 753.4 3.4 751 3.4 747.5V744.8M0.4 747.4L3.4 744.3L6.5 747.4" stroke="#6c707e"/><path d="M-3 785.8L-0.4 783.2L2 785.6" stroke="#6c707e"/><path d="M-3 825.4L-0.4 828L2 825.6" stroke="#6c707e"/><path d="M-2 863.2C2 863.2 3.8 865 3.6 868.5C3.5 871 2.2 872.5 2.2 875C2.2 877.5 3.5 879 3.6 881.5C3.8 885 2 886.8 -2 886.8" stroke="#6c707e"/><path d="M-3 917.6C1 918 5 921 7 924.6C5 928.2 1 931.2 -3 931.6" stroke="#6c707e"/><path d="M-3 955L1 955L5 963L1 971L-3 971" stroke="#3f9e52" stroke-width="1.6"/><path d="M-3 994.2L1 994.2L5 1002.2L1 1010.2L-3 1010.2" stroke="#db3b4b" stroke-width="1.6"/><path d="M-2 1030.4H1.6A2.4 2.4 0 0 1 4 1032.8V1040.4" stroke="#6c707e"/><path d="M3 1043.5V1051M0 1045.4L6 1049.1M6 1045.4L0 1049.1" stroke="#6c707e" stroke-width="1"/></g><path d="M8.3 931.5V938H1.8Z" fill="#43454a"/><g fill="#6c707e"><circle cx="-0.2" cy="1087.6" r="1.2"/><circle cx="-0.2" cy="1115.6" r="1.2"/><circle cx="-0.2" cy="1122.4" r="1.2"/><circle cx="-0.2" cy="1149.2" r="1.2"/><circle cx="-0.2" cy="1165.6" r="1.2"/></g><path d="M-2 1199.6H1.4A2 2 0 0 1 3.4 1201.6V1212M-2 1204.6H0.6M-2 1208.6H0.6" fill="none" stroke="#6c707e" stroke-width="1.4"/></svg>
<div class="clip" style="left:1016px;top:717px;width:764px;height:494px;background:#fff">
<div class="a" style="left:-1016px;top:-717px;width:1780px;height:1211px">
<div class="a" style="left:1016px;top:915px;width:764px;height:42px;background:#f5f8fe"></div>
<div class="a" style="left:1121.3px;top:717px;width:1.5px;height:620px;background:#ebecf0"></div>
<div class="t" style="left:1024.3px;width:60px;text-align:right;top:715.8px;height:42px;line-height:42px;font-size:25px;letter-spacing:0.35px;color:#aeb3c2">113</div>
<div class="t" style="left:1024.3px;width:60px;text-align:right;top:916.8px;height:42px;line-height:42px;font-size:25px;letter-spacing:0.35px;color:#767a8a">122</div>
<div class="t" style="left:1024.3px;width:60px;text-align:right;top:958.8px;height:42px;line-height:42px;font-size:25px;letter-spacing:0.35px;color:#aeb3c2">123</div>
<div class="t" style="left:1024.3px;width:60px;text-align:right;top:1000.8px;height:42px;line-height:42px;font-size:25px;letter-spacing:0.35px;color:#aeb3c2">124</div>
<div class="t" style="left:1024.3px;width:60px;text-align:right;top:1042.8px;height:42px;line-height:42px;font-size:25px;letter-spacing:0.35px;color:#aeb3c2">125</div>
<div class="t" style="left:1024.3px;width:60px;text-align:right;top:1084.8px;height:42px;line-height:42px;font-size:25px;letter-spacing:0.35px;color:#aeb3c2">126</div>
<div class="t" style="left:1024.3px;width:60px;text-align:right;top:1126.8px;height:42px;line-height:42px;font-size:25px;letter-spacing:0.35px;color:#aeb3c2">127</div>
<div class="t" style="left:1024.3px;width:60px;text-align:right;top:1168.8px;height:42px;line-height:42px;font-size:25px;letter-spacing:0.35px;color:#aeb3c2">128</div>
<div class="t" style="left:1153.5px;top:716px;height:42px;line-height:42px;font-size:26px;letter-spacing:0.55px;color:#000"><span class="cm" style="display:inline-block;transform:skewX(-17.5deg);font-size:31px;line-height:0;position:relative;top:2.2px;letter-spacing:2.4px;margin-left:2.5px;margin-right:1px">//</span><span class="cm" style="letter-spacing:2.34px;position:relative;top:-1px">-----------------------------------------------------------------------</span></div>
<div class="a" style="left:1152.0px;top:762.3px;width:3px;height:146.5px;background:#e6e6e8"></div>
<div class="t" style="left:1173.5px;top:763.0px;height:36px;line-height:36px;font-size:20px;letter-spacing:0.36px;color:#8c8c8c;">Transforms a key.</div>
<div class="t" style="left:1173.5px;top:799.0px;height:36px;line-height:36px;font-size:20px;letter-spacing:0.36px;color:#8c8c8c;">The transformer itself may throw an exception if necessary.</div>
<div class="t" style="left:1176.5px;top:837.5px;height:36px;line-height:36px;font-size:20px;letter-spacing:0.36px;color:#8c8c8c;"><span class="cj" style="font-size:18.5px;">形参:</span><span style="margin-left:8px;color:#7c7c7c;-webkit-text-stroke:0.25px #7c7c7c;letter-spacing:0.4px">object</span><span style="letter-spacing:-0.35px"> – </span><span style="letter-spacing:0.48px">the object to transform</span></div>
<div class="t" style="left:1176.5px;top:869.0px;height:36px;line-height:36px;font-size:20px;letter-spacing:0.36px;color:#8c8c8c;"><span class="cj" style="font-size:18.5px;">抛出:</span><span style="margin-left:8px;color:#f50000">the</span><span style="letter-spacing:-0.35px"> – </span>transformed object</div>
<div class="a" style="left:1148.0px;top:959px;width:1.5px;height:166px;background:#e6e6e9"></div>
<div class="a" style="left:1176.0px;top:1001px;width:1.5px;height:42px;background:#e6e6e9"></div>
<div class="t" style="left:1153.5px;top:917px;height:42px;line-height:42px;font-size:26px;letter-spacing:0.55px;color:#000"><span class="kw">protected</span> Object <span class="fn" style="background:#edebfc;padding:8px 0 5px">transformKey</span><span style="background:#93d9d9;padding:8px 0 5px">(</span><span style="letter-spacing:0.4px">Object object</span><span style="background:#93d9d9;padding:8px 0 5px">)</span> {</div>
<div class="t" style="left:1181.5px;top:959px;height:42px;line-height:42px;font-size:26px;letter-spacing:0.55px;color:#000"><span class="kw">if</span> (<span class="fd">keyTransformer</span> <span style="letter-spacing:3px">==</span> <span class="kw" style="letter-spacing:0.5px">null</span>) {</div>
<div class="t" style="left:1209.5px;top:1001px;height:42px;line-height:42px;font-size:26px;letter-spacing:0.55px;color:#000"><span class="kw">return</span> object;</div>
<div class="t" style="left:1181.5px;top:1043px;height:42px;line-height:42px;font-size:26px;letter-spacing:0.55px;color:#000">}</div>
<div class="t" style="left:1181.5px;top:1085px;height:42px;line-height:42px;font-size:26px;letter-spacing:0.55px;color:#000"><span class="kw">return</span> <span class="fd">keyTransformer</span>.transform(object);</div>
<div class="t" style="left:1153.5px;top:1127px;height:42px;line-height:42px;font-size:26px;letter-spacing:0.55px;color:#000">}</div>
</div></div>
</body></html>
